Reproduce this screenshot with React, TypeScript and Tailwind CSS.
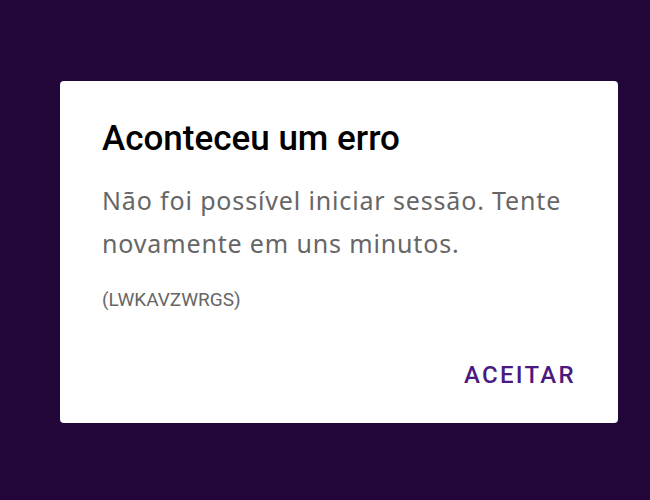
export default function App() {
  return (
    <div className="w-[650px] h-[500px] bg-[#230639] flex items-start justify-start pt-[81px] pl-[60px]">
      <div className="w-[558px] h-[342px] bg-white rounded-[4px] flex flex-col px-[42px] pt-[38px] pb-[34px]">
        <h1 className="text-[35px] leading-[40px] font-medium text-black font-['Roboto',sans-serif]">
          Aconteceu um erro
        </h1>
        <p className="mt-[20px] text-[25px] leading-[43px] tracking-[0.85px] text-[#666666] font-['Noto_Sans',sans-serif]">
          Não foi possível iniciar sessão. Tente novamente em uns minutos.
        </p>
        <p className="mt-[23px] text-[19px] leading-[24px] text-[#666666] font-['Roboto',sans-serif]">
          (LWKAVZWRGS)
        </p>
        <div className="mt-auto flex justify-end">
          <button className="text-[24px] leading-[28px] font-medium tracking-[2.3px] text-[#4b1a80] font-['Roboto',sans-serif]">
            ACEITAR
          </button>
        </div>
      </div>
    </div>
  );
}
